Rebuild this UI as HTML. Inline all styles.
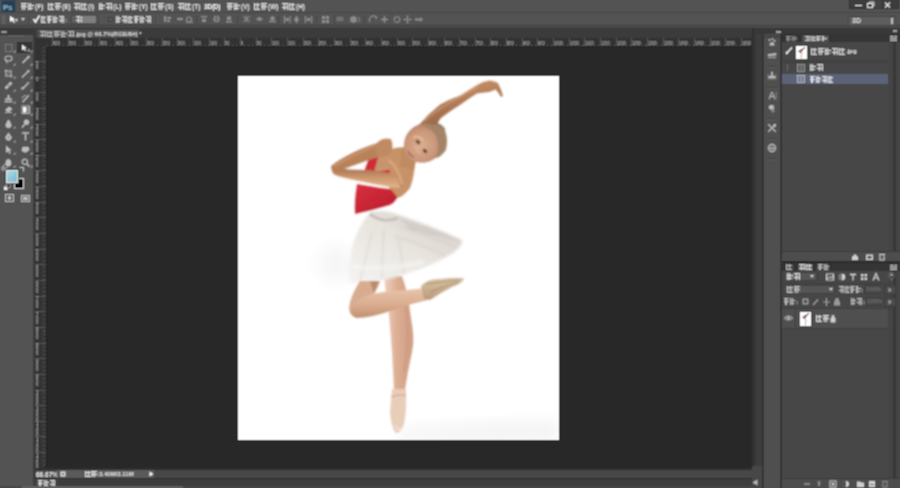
<!DOCTYPE html>
<html><head><meta charset="utf-8">
<style>
*{margin:0;padding:0;box-sizing:border-box}
html,body{width:900px;height:488px;overflow:hidden;background:#282828;font-family:"Liberation Sans",sans-serif;position:relative}
.a{position:absolute}
.t{position:absolute;font-size:7px;line-height:8px;color:#f0f0f0;white-space:nowrap;letter-spacing:0;font-weight:bold}
.rl{position:absolute;font-size:5.5px;line-height:6px;color:#a8a8a8;white-space:nowrap;font-weight:bold;}
.cj::before{content:"";position:absolute;left:0;top:1px;right:0;bottom:1px;background:currentColor;opacity:.2}
.cj{position:relative;opacity:.78;display:inline-block;width:7px;height:7px;margin-right:1px;vertical-align:top;background:linear-gradient(currentColor,currentColor) 0 0/100% 1px no-repeat,linear-gradient(currentColor,currentColor) 0 3px/100% 1px no-repeat,linear-gradient(currentColor,currentColor) 1px 0/1px 100% no-repeat,linear-gradient(currentColor,currentColor) calc(100% - 2px) 1px/1px calc(100% - 1px) no-repeat}
.cj.b{background:linear-gradient(currentColor,currentColor) 0 1px/100% 1px no-repeat,linear-gradient(currentColor,currentColor) 0 100%/100% 1px no-repeat,linear-gradient(currentColor,currentColor) 0 0/1px 100% no-repeat,linear-gradient(currentColor,currentColor) 60% 0/1px 100% no-repeat}
.cj.c{background:linear-gradient(currentColor,currentColor) 100% 0/1px 100% no-repeat,linear-gradient(currentColor,currentColor) 0 0/100% 1px no-repeat,linear-gradient(currentColor,currentColor) 0 4px/100% 1px no-repeat,linear-gradient(currentColor,currentColor) 2px 0/1px 100% no-repeat}
.cj.d{background:linear-gradient(currentColor,currentColor) 0 2px/100% 1px no-repeat,linear-gradient(currentColor,currentColor) 0 5px/80% 1px no-repeat,linear-gradient(currentColor,currentColor) 40% 0/1px 100% no-repeat,linear-gradient(currentColor,currentColor) 0 0/1px 100% no-repeat}
.m{position:absolute;top:3px;height:8px;font-size:7px;line-height:8px;color:#d0d0d0;white-space:nowrap}
.m span.p{display:inline-block;vertical-align:top}
svg{position:absolute;overflow:visible}
</style></head><body>
<svg width="0" height="0" style="position:absolute;left:0;top:0"><defs><filter id="sb" x="0" y="0" width="100%" height="100%"><feConvolveMatrix order="3" kernelMatrix="1 2 1 2 4 2 1 2 1" divisor="16" edgeMode="duplicate" preserveAlpha="false"/></filter></defs></svg>
<div id="root" style="position:absolute;left:0;top:0;width:900px;height:488px;overflow:hidden;filter:url(#sb)">
<div class="a" style="left:0px;top:0px;width:900px;height:13px;background:#525252;"></div>
<div class="a" style="left:0px;top:12px;width:900px;height:1px;background:#474747;"></div>
<div class="a" style="left:1px;top:0px;width:15px;height:13px;background:#2a3c4c;box-shadow:inset 0 0 0 1px #344c60"></div>
<div class="t" style="left:3px;top:2.5px;font-size:8px;line-height:9px;color:#86b8e0;font-weight:bold;letter-spacing:-.3px">Ps</div>
<div class="t" style="left:21px;top:3px;color:#d8d8d8"><span class="cj " style="width:6px;height:7px;margin-right:1px;color:#ffffff"></span><span class="cj d" style="width:6px;height:7px;margin-right:1px;color:#ffffff"></span><span style="font-size:6.5px;vertical-align:top;line-height:7px;color:#e8e8e8">(F)</span></div>
<div class="t" style="left:48px;top:3px;color:#d8d8d8"><span class="cj b" style="width:6px;height:7px;margin-right:1px;color:#ffffff"></span><span class="cj " style="width:6px;height:7px;margin-right:1px;color:#ffffff"></span><span style="font-size:6.5px;vertical-align:top;line-height:7px;color:#e8e8e8">(E)</span></div>
<div class="t" style="left:74px;top:3px;color:#d8d8d8"><span class="cj c" style="width:6px;height:7px;margin-right:1px;color:#ffffff"></span><span class="cj b" style="width:6px;height:7px;margin-right:1px;color:#ffffff"></span><span style="font-size:6.5px;vertical-align:top;line-height:7px;color:#e8e8e8">(I)</span></div>
<div class="t" style="left:99px;top:3px;color:#d8d8d8"><span class="cj d" style="width:6px;height:7px;margin-right:1px;color:#ffffff"></span><span class="cj c" style="width:6px;height:7px;margin-right:1px;color:#ffffff"></span><span style="font-size:6.5px;vertical-align:top;line-height:7px;color:#e8e8e8">(L)</span></div>
<div class="t" style="left:125px;top:3px;color:#d8d8d8"><span class="cj " style="width:6px;height:7px;margin-right:1px;color:#ffffff"></span><span class="cj d" style="width:6px;height:7px;margin-right:1px;color:#ffffff"></span><span style="font-size:6.5px;vertical-align:top;line-height:7px;color:#e8e8e8">(Y)</span></div>
<div class="t" style="left:151px;top:3px;color:#d8d8d8"><span class="cj b" style="width:6px;height:7px;margin-right:1px;color:#ffffff"></span><span class="cj " style="width:6px;height:7px;margin-right:1px;color:#ffffff"></span><span style="font-size:6.5px;vertical-align:top;line-height:7px;color:#e8e8e8">(S)</span></div>
<div class="t" style="left:178px;top:3px;color:#d8d8d8"><span class="cj c" style="width:6px;height:7px;margin-right:1px;color:#ffffff"></span><span class="cj b" style="width:6px;height:7px;margin-right:1px;color:#ffffff"></span><span style="font-size:6.5px;vertical-align:top;line-height:7px;color:#e8e8e8">(T)</span></div>
<div class="t" style="left:204px;top:3px;font-size:6.5px;line-height:7.5px;color:#ffffff;letter-spacing:-.2px">3D(D)</div>
<div class="t" style="left:227px;top:3px;color:#d8d8d8"><span class="cj " style="width:6px;height:7px;margin-right:1px;color:#ffffff"></span><span class="cj d" style="width:6px;height:7px;margin-right:1px;color:#ffffff"></span><span style="font-size:6.5px;vertical-align:top;line-height:7px;color:#e8e8e8">(V)</span></div>
<div class="t" style="left:254px;top:3px;color:#d8d8d8"><span class="cj b" style="width:6px;height:7px;margin-right:1px;color:#ffffff"></span><span class="cj " style="width:6px;height:7px;margin-right:1px;color:#ffffff"></span><span style="font-size:6.5px;vertical-align:top;line-height:7px;color:#e8e8e8">(W)</span></div>
<div class="t" style="left:282px;top:3px;color:#d8d8d8"><span class="cj c" style="width:6px;height:7px;margin-right:1px;color:#ffffff"></span><span class="cj b" style="width:6px;height:7px;margin-right:1px;color:#ffffff"></span><span style="font-size:6.5px;vertical-align:top;line-height:7px;color:#e8e8e8">(H)</span></div>
<div class="a" style="left:849px;top:0px;width:50px;height:9px;background:#3d3d3d;border:1px solid #333;border-top:none"></div>
<div class="a" style="left:855px;top:5px;width:7px;height:1px;background:#e8e8e8;"></div>
<svg style="left:866px;top:1px" width="9" height="8"><rect x="1.5" y="2.5" width="5" height="4" fill="#3d3d3d" stroke="#e0e0e0" stroke-width="1"/><path d="M3.5 2.5V1H8V5H6.5" stroke="#e0e0e0" stroke-width="1" fill="none"/></svg>
<div class="a" style="left:876px;top:1px;width:1px;height:7px;background:#474747;"></div>
<div class="a" style="left:878px;top:1px;width:1px;height:7px;background:#474747;"></div>
<div class="a" style="left:880px;top:1px;width:1px;height:7px;background:#474747;"></div>
<svg style="left:884px;top:2px" width="7" height="6"><path d="M1 0.5L6 5.5M6 0.5L1 5.5" stroke="#ececec" stroke-width="1.1"/></svg>
<div class="a" style="left:0px;top:13px;width:900px;height:11px;background:#535353;"></div>
<div class="a" style="left:0px;top:23px;width:900px;height:1px;background:#575757;"></div>
<div class="a" style="left:0px;top:24px;width:900px;height:4px;background:#484848;"></div>
<div class="a" style="left:2px;top:15px;width:1px;height:9px;background:#6a6a6a;"></div>
<div class="a" style="left:4px;top:15px;width:1px;height:9px;background:#6a6a6a;"></div>
<svg style="left:9px;top:15px" width="9" height="9"><path d="M1 1L1 7L3 5.5L5 8L6 7.2L4.2 4.8L6.5 4.5Z" fill="#ffffff"/><path d="M6 5H9M7.5 3.5V6.5" stroke="#cfcfcf" stroke-width="1"/></svg>
<svg style="left:21px;top:18px" width="5" height="4"><path d="M0 0H4L2 3Z" fill="#c8c8c8"/></svg>
<div class="a" style="left:29px;top:15px;width:1px;height:9px;background:#444;"></div>
<div class="a" style="left:30px;top:15px;width:1px;height:9px;background:#5e5e5e;"></div>
<svg style="left:33px;top:15px" width="7" height="8"><path d="M0.5 4L2.5 7L6.5 0.5" stroke="#fafafa" stroke-width="1.5" fill="none"/></svg>
<div class="t" style="left:41px;top:16px"><span class="cj b" style="width:5px;height:7px;margin-right:1px;color:#f8f8f8"></span><span class="cj " style="width:5px;height:7px;margin-right:1px;color:#f8f8f8"></span><span class="cj d" style="width:5px;height:7px;margin-right:1px;color:#f8f8f8"></span><span class="cj c" style="width:5px;height:7px;margin-right:1px;color:#f8f8f8"></span><span style="font-size:6px">:</span></div>
<div class="a" style="left:71px;top:15px;width:27px;height:9px;background:#5f5f5f;border:1px solid #474747"></div>
<div class="t" style="left:76px;top:16px"><span class="cj c" style="width:6px;height:7px;margin-right:0px;color:#fafafa"></span></div>
<div class="a" style="left:80px;top:16px;width:16px;height:7px;background:repeating-linear-gradient(90deg,#9a9a9a 0 1px,transparent 1px 2px),repeating-linear-gradient(180deg,#888 0 1px,transparent 1px 3px);opacity:.8"></div>
<div class="a" style="left:99px;top:15px;width:1px;height:9px;background:#444;"></div>
<div class="a" style="left:100px;top:15px;width:1px;height:9px;background:#5e5e5e;"></div>
<div class="a" style="left:108px;top:17px;width:5px;height:5px;background:#5a5a5a;border:1px solid #3c3c3c"></div>
<div class="t" style="left:116px;top:16px"><span class="cj d" style="width:5px;height:7px;margin-right:1px;color:#f8f8f8"></span><span class="cj c" style="width:5px;height:7px;margin-right:1px;color:#f8f8f8"></span><span class="cj b" style="width:5px;height:7px;margin-right:1px;color:#f8f8f8"></span><span class="cj " style="width:5px;height:7px;margin-right:1px;color:#f8f8f8"></span><span class="cj d" style="width:5px;height:7px;margin-right:1px;color:#f8f8f8"></span><span class="cj c" style="width:5px;height:7px;margin-right:1px;color:#f8f8f8"></span></div>
<div class="a" style="left:156px;top:15px;width:1px;height:9px;background:#444;"></div>
<div class="a" style="left:157px;top:15px;width:1px;height:9px;background:#5e5e5e;"></div>
<svg style="left:163px;top:15px" width="10" height="9"><rect x="1" y="1" width="2" height="6" fill="#8c8c8c"/><rect x="4" y="2" width="4" height="2" fill="#8c8c8c"/><rect x="4" y="5" width="3" height="2" fill="#8c8c8c"/></svg>
<svg style="left:176px;top:15px" width="10" height="9"><rect x="1" y="3" width="6" height="2" fill="#8c8c8c"/><circle cx="4" cy="4" r="1.5" fill="#8c8c8c"/></svg>
<svg style="left:185px;top:15px" width="10" height="9"><circle cx="4" cy="4.5" r="2.5" fill="none" stroke="#8c8c8c" stroke-width="1.2"/><rect x="1" y="6.5" width="7" height="1.2" fill="#8c8c8c"/></svg>
<svg style="left:200px;top:15px" width="10" height="9"><rect x="1" y="1" width="6" height="1.5" fill="#8c8c8c"/><rect x="2" y="4" width="4" height="3" fill="#8c8c8c"/></svg>
<svg style="left:212px;top:15px" width="10" height="9"><rect x="1" y="3.5" width="7" height="1.2" fill="#8c8c8c"/><rect x="2.5" y="1.5" width="4" height="5" fill="none" stroke="#8c8c8c" stroke-width="1"/></svg>
<svg style="left:225px;top:15px" width="10" height="9"><rect x="1" y="6" width="6" height="1.5" fill="#8c8c8c"/><rect x="2" y="1.5" width="4" height="3.5" fill="#8c8c8c"/></svg>
<svg style="left:242px;top:15px" width="10" height="9"><path d="M1 2H8M1 6H8" stroke="#8c8c8c" stroke-width="1.2"/><circle cx="4.5" cy="4" r="1.6" fill="#8c8c8c"/></svg>
<svg style="left:255px;top:15px" width="10" height="9"><rect x="1" y="3.5" width="7" height="1.2" fill="#8c8c8c"/><circle cx="4.5" cy="4" r="2" fill="#8c8c8c"/></svg>
<svg style="left:268px;top:15px" width="10" height="9"><path d="M1 6.5H8" stroke="#8c8c8c" stroke-width="1.2"/><circle cx="4.5" cy="3.5" r="2.2" fill="#8c8c8c"/></svg>
<svg style="left:283px;top:15px" width="10" height="9"><path d="M1.5 1V8M7 1V8" stroke="#8c8c8c" stroke-width="1.2"/><circle cx="4.2" cy="4.5" r="1.7" fill="#8c8c8c"/></svg>
<svg style="left:292px;top:15px" width="10" height="9"><path d="M4.5 1V8" stroke="#8c8c8c" stroke-width="1.2"/><circle cx="4.5" cy="4.5" r="2.2" fill="#8c8c8c"/></svg>
<svg style="left:304px;top:15px" width="10" height="9"><path d="M1.5 1V8M7.5 1V8" stroke="#8c8c8c" stroke-width="1.2"/><circle cx="4.5" cy="4.5" r="1.8" fill="#8c8c8c"/></svg>
<svg style="left:321px;top:15px" width="10" height="9"><rect x="1" y="1" width="3" height="3" fill="#8c8c8c"/><rect x="5" y="1" width="3" height="3" fill="#8c8c8c"/><rect x="1" y="5" width="3" height="3" fill="#8c8c8c"/><rect x="5" y="5" width="3" height="3" fill="#8c8c8c"/></svg>
<svg style="left:349px;top:15px" width="10" height="9"><circle cx="4.5" cy="4.5" r="3.3" fill="#8c8c8c"/><path d="M9 2L11 4.5L9 7" stroke="#8c8c8c" fill="none"/></svg>
<svg style="left:369px;top:15px" width="10" height="9"><path d="M1 7A4 4 0 0 1 8 3" stroke="#8c8c8c" stroke-width="1.3" fill="none"/><path d="M6.5 1.5L8.5 3L6.5 4.5Z" fill="#8c8c8c"/></svg>
<svg style="left:380px;top:15px" width="10" height="9"><path d="M4.5 1V8M1 4.5H8" stroke="#8c8c8c" stroke-width="1.3"/><circle cx="4.5" cy="4.5" r="1.5" fill="#8c8c8c"/></svg>
<svg style="left:393px;top:15px" width="10" height="9"><circle cx="4" cy="4.5" r="2.8" fill="none" stroke="#8c8c8c" stroke-width="1.1"/></svg>
<svg style="left:403px;top:15px" width="10" height="9"><path d="M4.5 0.5V8.5M0.5 4.5H8.5" stroke="#8c8c8c" stroke-width="1.1"/><path d="M4.5 0.5L3 2H6Z M4.5 8.5L3 7H6Z M0.5 4.5L2 3V6Z M8.5 4.5L7 3V6Z" fill="#8c8c8c"/></svg>
<svg style="left:414px;top:15px" width="10" height="9"><path d="M1 4.5H7" stroke="#8c8c8c" stroke-width="2.2"/><path d="M6.5 2L9 4.5L6.5 7Z" fill="#8c8c8c"/></svg>
<div class="a" style="left:196px;top:15px;width:1px;height:9px;background:#474747;"></div>
<div class="a" style="left:237px;top:15px;width:1px;height:9px;background:#474747;"></div>
<div class="a" style="left:278px;top:15px;width:1px;height:9px;background:#474747;"></div>
<div class="a" style="left:316px;top:15px;width:1px;height:9px;background:#474747;"></div>
<div class="a" style="left:334px;top:15px;width:1px;height:9px;background:#474747;"></div>
<div class="a" style="left:364px;top:15px;width:1px;height:9px;background:#474747;"></div>
<div class="t" style="left:336px;top:16px;font-size:6px;line-height:7px;color:#8c8c8c;">3D</div>
<div class="a" style="left:848px;top:16px;width:48px;height:10px;background:#5d5d5d;border:1px solid #464646"></div>
<div class="t" style="left:852px;top:17px;font-size:7px;line-height:8px;color:#e0e0e0;">3D</div>
<div class="a" style="left:891px;top:18px;width:2px;height:6px;background:#bdbdbd;"></div>
<div class="a" style="left:0px;top:28px;width:33px;height:460px;background:#535353;"></div>
<div class="a" style="left:0px;top:28px;width:33px;height:7px;background:#393939;"></div>
<div class="a" style="left:1px;top:31px;width:6px;height:2px;background:#9a9a9a;border-radius:1px"></div>
<div class="a" style="left:33px;top:28px;width:2px;height:460px;background:#3a3a3a;"></div>
<div class="a" style="left:8px;top:36px;width:16px;height:1px;background:#6a6a6a;"></div>
<div class="a" style="left:8px;top:37px;width:16px;height:1px;background:#454545;"></div>
<div class="a" style="left:17px;top:42px;width:15px;height:11px;background:#343434;border:1px solid #2a2a2a"></div>
<svg style="left:4px;top:42.9px" width="10" height="10" viewBox="0 0 10 10"><rect x="1.5" y="1.5" width="6.5" height="7" fill="none" stroke="#9c9c9c" stroke-width="1" stroke-dasharray="1 1"/></svg>
<svg style="left:13px;top:50.4px" width="3" height="3"><path d="M0 2.5H2.5V0Z" fill="#a8a8a8"/></svg>
<svg style="left:20.5px;top:42.9px" width="10" height="10" viewBox="0 0 10 10"><path d="M1 1.5V7.5L2.8 6L4 8.2L5 7.7L3.9 5.5L6 5.3Z" fill="#ececec"/><path d="M5.5 8.5L8 5.5L10 8.5Z" fill="#9a9a9a"/></svg>
<svg style="left:29.5px;top:50.4px" width="3" height="3"><path d="M0 2.5H2.5V0Z" fill="#a8a8a8"/></svg>
<svg style="left:4px;top:55.2px" width="10" height="10" viewBox="0 0 10 10"><ellipse cx="4.5" cy="3.5" rx="3.5" ry="2.5" fill="none" stroke="#bdbdbd" stroke-width="1.2"/><path d="M2.5 5.5Q2 8 3.5 8.5" stroke="#bdbdbd" fill="none"/></svg>
<svg style="left:13px;top:62.7px" width="3" height="3"><path d="M0 2.5H2.5V0Z" fill="#a8a8a8"/></svg>
<svg style="left:20.5px;top:55.2px" width="10" height="10" viewBox="0 0 10 10"><path d="M1.5 8L7.5 2" stroke="#bdbdbd" stroke-width="1.6"/><circle cx="7.5" cy="2" r="1.3" fill="#bdbdbd"/></svg>
<svg style="left:29.5px;top:62.7px" width="3" height="3"><path d="M0 2.5H2.5V0Z" fill="#a8a8a8"/></svg>
<svg style="left:4px;top:68.5px" width="10" height="10" viewBox="0 0 10 10"><path d="M2 0.5V7H8.5M0.5 2H7V8.5" stroke="#bdbdbd" stroke-width="1.1" fill="none"/><path d="M1 8L8 1" stroke="#9a9a9a" stroke-width=".7"/></svg>
<svg style="left:13px;top:76.0px" width="3" height="3"><path d="M0 2.5H2.5V0Z" fill="#a8a8a8"/></svg>
<svg style="left:20.5px;top:68.5px" width="10" height="10" viewBox="0 0 10 10"><path d="M1 8.5L6.5 3" stroke="#bdbdbd" stroke-width="1.3"/><path d="M5.5 2L8 0.8L8.7 1.5L7.5 4Z" fill="#bdbdbd"/></svg>
<svg style="left:29.5px;top:76.0px" width="3" height="3"><path d="M0 2.5H2.5V0Z" fill="#a8a8a8"/></svg>
<svg style="left:4px;top:81.4px" width="10" height="10" viewBox="0 0 10 10"><path d="M1.5 7.5L7.5 1.5" stroke="#bdbdbd" stroke-width="2.6"/><circle cx="4.5" cy="4.5" r=".8" fill="#535353"/></svg>
<svg style="left:13px;top:88.9px" width="3" height="3"><path d="M0 2.5H2.5V0Z" fill="#a8a8a8"/></svg>
<svg style="left:20.5px;top:81.4px" width="10" height="10" viewBox="0 0 10 10"><path d="M1.5 8.2L7.8 1.2" stroke="#bdbdbd" stroke-width="1.3"/><path d="M1 8.5Q0.5 6.5 2.5 6.5" stroke="#bdbdbd" stroke-width="1.4" fill="none"/></svg>
<svg style="left:29.5px;top:88.9px" width="3" height="3"><path d="M0 2.5H2.5V0Z" fill="#a8a8a8"/></svg>
<svg style="left:4px;top:93.7px" width="10" height="10" viewBox="0 0 10 10"><path d="M3.5 1H5.5V4.5H8V6H1V4.5H3.5Z" fill="#bdbdbd"/><rect x="0.5" y="7" width="8" height="1.3" fill="#bdbdbd"/></svg>
<svg style="left:13px;top:101.2px" width="3" height="3"><path d="M0 2.5H2.5V0Z" fill="#a8a8a8"/></svg>
<svg style="left:20.5px;top:93.7px" width="10" height="10" viewBox="0 0 10 10"><path d="M1.5 8.2L7.8 1.2" stroke="#bdbdbd" stroke-width="1.3"/><path d="M1 4.5Q2 1.5 5 1.5" stroke="#bdbdbd" stroke-width=".9" fill="none"/></svg>
<svg style="left:29.5px;top:101.2px" width="3" height="3"><path d="M0 2.5H2.5V0Z" fill="#a8a8a8"/></svg>
<svg style="left:4px;top:105.2px" width="10" height="10" viewBox="0 0 10 10"><path d="M1 5L5 1.5L8.5 4L4.5 7.5Z" fill="#bdbdbd"/><path d="M1 7.5H8" stroke="#bdbdbd" stroke-width=".8"/></svg>
<svg style="left:13px;top:112.7px" width="3" height="3"><path d="M0 2.5H2.5V0Z" fill="#a8a8a8"/></svg>
<svg style="left:20.5px;top:105.2px" width="10" height="10" viewBox="0 0 10 10"><rect x="1" y="1" width="7.5" height="7.5" fill="none" stroke="#bdbdbd" stroke-width=".9"/><rect x="2" y="2" width="5.5" height="5.5" fill="#9a9a9a"/><rect x="2" y="2" width="3" height="5.5" fill="#fafafa"/></svg>
<svg style="left:29.5px;top:112.7px" width="3" height="3"><path d="M0 2.5H2.5V0Z" fill="#a8a8a8"/></svg>
<svg style="left:4px;top:118.8px" width="10" height="10" viewBox="0 0 10 10"><path d="M4.5 0.5Q7.5 4.5 7.5 6A3 3 0 0 1 1.5 6Q1.5 4.5 4.5 0.5Z" fill="#bdbdbd"/></svg>
<svg style="left:13px;top:126.3px" width="3" height="3"><path d="M0 2.5H2.5V0Z" fill="#a8a8a8"/></svg>
<svg style="left:20.5px;top:118.8px" width="10" height="10" viewBox="0 0 10 10"><circle cx="5.5" cy="3.2" r="2.6" fill="#bdbdbd"/><path d="M4 5L1 8.5" stroke="#bdbdbd" stroke-width="1.3"/></svg>
<svg style="left:29.5px;top:126.3px" width="3" height="3"><path d="M0 2.5H2.5V0Z" fill="#a8a8a8"/></svg>
<svg style="left:4px;top:132.1px" width="10" height="10" viewBox="0 0 10 10"><path d="M4.5 0.5L8 5.5L6 8.5H3L1 5.5Z" fill="#bdbdbd"/><circle cx="4.5" cy="5.2" r=".8" fill="#535353"/></svg>
<svg style="left:13px;top:139.6px" width="3" height="3"><path d="M0 2.5H2.5V0Z" fill="#a8a8a8"/></svg>
<svg style="left:20.5px;top:132.1px" width="10" height="10" viewBox="0 0 10 10"><path d="M1 1H8M4.5 1V8.5" stroke="#bdbdbd" stroke-width="1.4"/></svg>
<svg style="left:29.5px;top:139.6px" width="3" height="3"><path d="M0 2.5H2.5V0Z" fill="#a8a8a8"/></svg>
<svg style="left:4px;top:144.5px" width="10" height="10" viewBox="0 0 10 10"><path d="M2 0.5V8L4 6.2L5.6 9L6.8 8.4L5.3 5.6L7.8 5.4Z" fill="#bdbdbd"/></svg>
<svg style="left:13px;top:152.0px" width="3" height="3"><path d="M0 2.5H2.5V0Z" fill="#a8a8a8"/></svg>
<svg style="left:20.5px;top:144.5px" width="10" height="10" viewBox="0 0 10 10"><path d="M1 3Q2 0.5 4.5 2Q7 0.5 8 3Q9 6 6 6.5Q5 8.8 3 7Q0 7 1 3Z" fill="#bdbdbd"/></svg>
<svg style="left:29.5px;top:152.0px" width="3" height="3"><path d="M0 2.5H2.5V0Z" fill="#a8a8a8"/></svg>
<svg style="left:4px;top:157.5px" width="10" height="10" viewBox="0 0 10 10"><path d="M2 4V2.2Q2.8 1.5 3.2 2.2V1.2Q4 0.5 4.6 1.2V1.5Q5.4 1 6 1.7V2.5Q6.8 2.2 7.2 2.9V6Q6.8 8.5 4.5 8.5Q2.5 8.5 1 5.5Q1.2 4.5 2 4Z" fill="#bdbdbd"/></svg>
<svg style="left:13px;top:165.0px" width="3" height="3"><path d="M0 2.5H2.5V0Z" fill="#a8a8a8"/></svg>
<svg style="left:20.5px;top:157.5px" width="10" height="10" viewBox="0 0 10 10"><circle cx="3.8" cy="3.8" r="2.6" fill="none" stroke="#bdbdbd" stroke-width="1.3"/><path d="M5.8 5.8L8.5 8.5" stroke="#bdbdbd" stroke-width="1.6"/></svg>
<svg style="left:29.5px;top:165.0px" width="3" height="3"><path d="M0 2.5H2.5V0Z" fill="#a8a8a8"/></svg>
<svg style="left:2px;top:165px" width="6" height="6"><rect x="0" y="2" width="3" height="3" fill="none" stroke="#cfcfcf" stroke-width=".8"/><rect x="2" y="0" width="3" height="3" fill="#222" stroke="#cfcfcf" stroke-width=".8"/></svg>
<svg style="left:19px;top:166px" width="6" height="6"><path d="M0.5 1.5H4.5V5.5" stroke="#cfcfcf" stroke-width=".9" fill="none"/></svg>
<div class="a" style="left:14px;top:178px;width:10px;height:11px;background:#000;border:1px solid #d0d0d0"></div>
<div class="a" style="left:6px;top:170px;width:12px;height:13px;background:#88c6d6;border:1px solid #e8e8e8;box-shadow:0 0 0 1px #333;background-image:linear-gradient(135deg,#a8dce6,#78b8cc)"></div>
<svg style="left:4px;top:184px" width="7" height="6"><rect x="0" y="2.5" width="3.5" height="3.5" fill="#eee"/><rect x="2.5" y="0" width="3.5" height="3.5" fill="#111" stroke="#ddd" stroke-width=".6"/></svg>
<svg style="left:5px;top:194px" width="10" height="9"><rect x="0.5" y="0.5" width="8" height="7" fill="none" stroke="#bdbdbd" stroke-width="1"/><circle cx="4.5" cy="4" r="2" fill="#bdbdbd"/></svg>
<svg style="left:21px;top:194px" width="10" height="9"><rect x="0.5" y="1.5" width="8" height="6" fill="none" stroke="#bdbdbd" stroke-width="1"/><rect x="2" y="3" width="5" height="3" fill="#bdbdbd"/></svg>
<div class="a" style="left:35px;top:28px;width:719px;height:10px;background:#3b3b3b;"></div>
<div class="a" style="left:37px;top:30px;width:102px;height:8px;background:#4b4b4b;border-top:1px solid #5a5a5a"></div>
<div class="t" style="left:40px;top:31px;font-size:6px;line-height:7px;color:#e2e2e2"><span class="cj c" style="width:6px;height:6px;margin-right:1px;color:#d0d0d0"></span><span class="cj b" style="width:6px;height:6px;margin-right:1px;color:#d0d0d0"></span><span class="cj " style="width:6px;height:6px;margin-right:1px;color:#d0d0d0"></span><span class="cj d" style="width:6px;height:6px;margin-right:1px;color:#d0d0d0"></span><span class="cj c" style="width:6px;height:6px;margin-right:1px;color:#d0d0d0"></span><span style="vertical-align:top">.jpg @ 66.7%(RGB/8#) *</span></div>
<div class="a" style="left:35px;top:38px;width:719px;height:9px;background:#323232;"></div>
<div class="a" style="left:35px;top:38px;width:12px;height:430px;background:#323232;"></div>
<div class="a" style="left:47px;top:46px;width:707px;height:1px;background:#262626;"></div>
<div class="a" style="left:46px;top:47px;width:1px;height:421px;background:#262626;"></div>
<div class="a" style="left:40px;top:47px;width:1px;height:421px;background:#2a2a2a;"></div>
<div class="a" style="left:41px;top:47px;width:3px;height:421px;background:#383838;"></div>
<div class="a" style="left:47px;top:45px;width:705px;height:1px;background:repeating-linear-gradient(90deg,#6a6a6a 0 1px,transparent 1px 3.9375px);opacity:.8"></div>
<div class="a" style="left:44px;top:47px;width:1px;height:421px;background:repeating-linear-gradient(180deg,#6a6a6a 0 1px,transparent 1px 3.9375px);opacity:.8"></div>
<div class="a" style="left:52.2px;top:38px;width:1px;height:8px;background:#555"></div>
<div class="rl" style="left:53.2px;top:39.5px;transform:scaleX(.72);transform-origin:0 0">600</div>
<div class="a" style="left:67.8px;top:38px;width:1px;height:8px;background:#555"></div>
<div class="rl" style="left:68.8px;top:39.5px;transform:scaleX(.72);transform-origin:0 0">550</div>
<div class="a" style="left:83.5px;top:38px;width:1px;height:8px;background:#555"></div>
<div class="rl" style="left:84.5px;top:39.5px;transform:scaleX(.72);transform-origin:0 0">500</div>
<div class="a" style="left:99.2px;top:38px;width:1px;height:8px;background:#555"></div>
<div class="rl" style="left:100.2px;top:39.5px;transform:scaleX(.72);transform-origin:0 0">450</div>
<div class="a" style="left:114.8px;top:38px;width:1px;height:8px;background:#555"></div>
<div class="rl" style="left:115.8px;top:39.5px;transform:scaleX(.72);transform-origin:0 0">400</div>
<div class="a" style="left:130.4px;top:38px;width:1px;height:8px;background:#555"></div>
<div class="rl" style="left:131.4px;top:39.5px;transform:scaleX(.72);transform-origin:0 0">350</div>
<div class="a" style="left:146.1px;top:38px;width:1px;height:8px;background:#555"></div>
<div class="rl" style="left:147.1px;top:39.5px;transform:scaleX(.72);transform-origin:0 0">300</div>
<div class="a" style="left:161.8px;top:38px;width:1px;height:8px;background:#555"></div>
<div class="rl" style="left:162.8px;top:39.5px;transform:scaleX(.72);transform-origin:0 0">250</div>
<div class="a" style="left:177.4px;top:38px;width:1px;height:8px;background:#555"></div>
<div class="rl" style="left:178.4px;top:39.5px;transform:scaleX(.72);transform-origin:0 0">200</div>
<div class="a" style="left:193.1px;top:38px;width:1px;height:8px;background:#555"></div>
<div class="rl" style="left:194.1px;top:39.5px;transform:scaleX(.72);transform-origin:0 0">150</div>
<div class="a" style="left:208.7px;top:38px;width:1px;height:8px;background:#555"></div>
<div class="rl" style="left:209.7px;top:39.5px;transform:scaleX(.72);transform-origin:0 0">100</div>
<div class="a" style="left:224.3px;top:38px;width:1px;height:8px;background:#555"></div>
<div class="rl" style="left:225.3px;top:39.5px;transform:scaleX(.72);transform-origin:0 0">50</div>
<div class="a" style="left:240.0px;top:38px;width:1px;height:8px;background:#555"></div>
<div class="rl" style="left:241.0px;top:39.5px;transform:scaleX(.72);transform-origin:0 0">0</div>
<div class="a" style="left:255.7px;top:38px;width:1px;height:8px;background:#555"></div>
<div class="rl" style="left:256.6px;top:39.5px;transform:scaleX(.72);transform-origin:0 0">50</div>
<div class="a" style="left:271.3px;top:38px;width:1px;height:8px;background:#555"></div>
<div class="rl" style="left:272.3px;top:39.5px;transform:scaleX(.72);transform-origin:0 0">100</div>
<div class="a" style="left:286.9px;top:38px;width:1px;height:8px;background:#555"></div>
<div class="rl" style="left:287.9px;top:39.5px;transform:scaleX(.72);transform-origin:0 0">150</div>
<div class="a" style="left:302.6px;top:38px;width:1px;height:8px;background:#555"></div>
<div class="rl" style="left:303.6px;top:39.5px;transform:scaleX(.72);transform-origin:0 0">200</div>
<div class="a" style="left:318.2px;top:38px;width:1px;height:8px;background:#555"></div>
<div class="rl" style="left:319.2px;top:39.5px;transform:scaleX(.72);transform-origin:0 0">250</div>
<div class="a" style="left:333.9px;top:38px;width:1px;height:8px;background:#555"></div>
<div class="rl" style="left:334.9px;top:39.5px;transform:scaleX(.72);transform-origin:0 0">300</div>
<div class="a" style="left:349.6px;top:38px;width:1px;height:8px;background:#555"></div>
<div class="rl" style="left:350.6px;top:39.5px;transform:scaleX(.72);transform-origin:0 0">350</div>
<div class="a" style="left:365.2px;top:38px;width:1px;height:8px;background:#555"></div>
<div class="rl" style="left:366.2px;top:39.5px;transform:scaleX(.72);transform-origin:0 0">400</div>
<div class="a" style="left:380.9px;top:38px;width:1px;height:8px;background:#555"></div>
<div class="rl" style="left:381.9px;top:39.5px;transform:scaleX(.72);transform-origin:0 0">450</div>
<div class="a" style="left:396.5px;top:38px;width:1px;height:8px;background:#555"></div>
<div class="rl" style="left:397.5px;top:39.5px;transform:scaleX(.72);transform-origin:0 0">500</div>
<div class="a" style="left:412.1px;top:38px;width:1px;height:8px;background:#555"></div>
<div class="rl" style="left:413.1px;top:39.5px;transform:scaleX(.72);transform-origin:0 0">550</div>
<div class="a" style="left:427.8px;top:38px;width:1px;height:8px;background:#555"></div>
<div class="rl" style="left:428.8px;top:39.5px;transform:scaleX(.72);transform-origin:0 0">600</div>
<div class="a" style="left:443.5px;top:38px;width:1px;height:8px;background:#555"></div>
<div class="rl" style="left:444.5px;top:39.5px;transform:scaleX(.72);transform-origin:0 0">650</div>
<div class="a" style="left:459.1px;top:38px;width:1px;height:8px;background:#555"></div>
<div class="rl" style="left:460.1px;top:39.5px;transform:scaleX(.72);transform-origin:0 0">700</div>
<div class="a" style="left:474.8px;top:38px;width:1px;height:8px;background:#555"></div>
<div class="rl" style="left:475.8px;top:39.5px;transform:scaleX(.72);transform-origin:0 0">750</div>
<div class="a" style="left:490.4px;top:38px;width:1px;height:8px;background:#555"></div>
<div class="rl" style="left:491.4px;top:39.5px;transform:scaleX(.72);transform-origin:0 0">800</div>
<div class="a" style="left:506.1px;top:38px;width:1px;height:8px;background:#555"></div>
<div class="rl" style="left:507.1px;top:39.5px;transform:scaleX(.72);transform-origin:0 0">850</div>
<div class="a" style="left:521.7px;top:38px;width:1px;height:8px;background:#555"></div>
<div class="rl" style="left:522.7px;top:39.5px;transform:scaleX(.72);transform-origin:0 0">900</div>
<div class="a" style="left:537.4px;top:38px;width:1px;height:8px;background:#555"></div>
<div class="rl" style="left:538.4px;top:39.5px;transform:scaleX(.72);transform-origin:0 0">950</div>
<div class="a" style="left:553.0px;top:38px;width:1px;height:8px;background:#555"></div>
<div class="rl" style="left:554.0px;top:39.5px;transform:scaleX(.72);transform-origin:0 0">1000</div>
<div class="a" style="left:568.7px;top:38px;width:1px;height:8px;background:#555"></div>
<div class="rl" style="left:569.7px;top:39.5px;transform:scaleX(.72);transform-origin:0 0">1050</div>
<div class="a" style="left:584.3px;top:38px;width:1px;height:8px;background:#555"></div>
<div class="rl" style="left:585.3px;top:39.5px;transform:scaleX(.72);transform-origin:0 0">1100</div>
<div class="a" style="left:600.0px;top:38px;width:1px;height:8px;background:#555"></div>
<div class="rl" style="left:601.0px;top:39.5px;transform:scaleX(.72);transform-origin:0 0">1150</div>
<div class="a" style="left:615.6px;top:38px;width:1px;height:8px;background:#555"></div>
<div class="rl" style="left:616.6px;top:39.5px;transform:scaleX(.72);transform-origin:0 0">1200</div>
<div class="a" style="left:631.2px;top:38px;width:1px;height:8px;background:#555"></div>
<div class="rl" style="left:632.2px;top:39.5px;transform:scaleX(.72);transform-origin:0 0">1250</div>
<div class="a" style="left:646.9px;top:38px;width:1px;height:8px;background:#555"></div>
<div class="rl" style="left:647.9px;top:39.5px;transform:scaleX(.72);transform-origin:0 0">1300</div>
<div class="a" style="left:662.5px;top:38px;width:1px;height:8px;background:#555"></div>
<div class="rl" style="left:663.5px;top:39.5px;transform:scaleX(.72);transform-origin:0 0">1350</div>
<div class="a" style="left:678.2px;top:38px;width:1px;height:8px;background:#555"></div>
<div class="rl" style="left:679.2px;top:39.5px;transform:scaleX(.72);transform-origin:0 0">1400</div>
<div class="a" style="left:693.9px;top:38px;width:1px;height:8px;background:#555"></div>
<div class="rl" style="left:694.9px;top:39.5px;transform:scaleX(.72);transform-origin:0 0">1450</div>
<div class="a" style="left:709.5px;top:38px;width:1px;height:8px;background:#555"></div>
<div class="rl" style="left:710.5px;top:39.5px;transform:scaleX(.72);transform-origin:0 0">1500</div>
<div class="a" style="left:725.2px;top:38px;width:1px;height:8px;background:#555"></div>
<div class="rl" style="left:726.2px;top:39.5px;transform:scaleX(.72);transform-origin:0 0">1550</div>
<div class="a" style="left:740.8px;top:38px;width:1px;height:8px;background:#555"></div>
<div class="rl" style="left:741.8px;top:39.5px;transform:scaleX(.72);transform-origin:0 0">1600</div>
<div class="a" style="left:35px;top:60.9px;width:11px;height:1px;background:#555"></div>
<div class="rl" style="left:36px;top:62.4px;width:4px;line-height:4px;font-size:4.5px;word-break:break-all;white-space:normal">50</div>
<div class="a" style="left:35px;top:76.5px;width:11px;height:1px;background:#555"></div>
<div class="rl" style="left:36px;top:78.0px;width:4px;line-height:4px;font-size:4.5px;word-break:break-all;white-space:normal">0</div>
<div class="a" style="left:35px;top:92.2px;width:11px;height:1px;background:#555"></div>
<div class="rl" style="left:36px;top:93.7px;width:4px;line-height:4px;font-size:4.5px;word-break:break-all;white-space:normal">50</div>
<div class="a" style="left:35px;top:107.8px;width:11px;height:1px;background:#555"></div>
<div class="rl" style="left:36px;top:109.3px;width:4px;line-height:4px;font-size:4.5px;word-break:break-all;white-space:normal">100</div>
<div class="a" style="left:35px;top:123.5px;width:11px;height:1px;background:#555"></div>
<div class="rl" style="left:36px;top:125.0px;width:4px;line-height:4px;font-size:4.5px;word-break:break-all;white-space:normal">150</div>
<div class="a" style="left:35px;top:139.1px;width:11px;height:1px;background:#555"></div>
<div class="rl" style="left:36px;top:140.6px;width:4px;line-height:4px;font-size:4.5px;word-break:break-all;white-space:normal">200</div>
<div class="a" style="left:35px;top:154.8px;width:11px;height:1px;background:#555"></div>
<div class="rl" style="left:36px;top:156.2px;width:4px;line-height:4px;font-size:4.5px;word-break:break-all;white-space:normal">250</div>
<div class="a" style="left:35px;top:170.4px;width:11px;height:1px;background:#555"></div>
<div class="rl" style="left:36px;top:171.9px;width:4px;line-height:4px;font-size:4.5px;word-break:break-all;white-space:normal">300</div>
<div class="a" style="left:35px;top:186.1px;width:11px;height:1px;background:#555"></div>
<div class="rl" style="left:36px;top:187.6px;width:4px;line-height:4px;font-size:4.5px;word-break:break-all;white-space:normal">350</div>
<div class="a" style="left:35px;top:201.7px;width:11px;height:1px;background:#555"></div>
<div class="rl" style="left:36px;top:203.2px;width:4px;line-height:4px;font-size:4.5px;word-break:break-all;white-space:normal">400</div>
<div class="a" style="left:35px;top:217.3px;width:11px;height:1px;background:#555"></div>
<div class="rl" style="left:36px;top:218.8px;width:4px;line-height:4px;font-size:4.5px;word-break:break-all;white-space:normal">450</div>
<div class="a" style="left:35px;top:233.0px;width:11px;height:1px;background:#555"></div>
<div class="rl" style="left:36px;top:234.5px;width:4px;line-height:4px;font-size:4.5px;word-break:break-all;white-space:normal">500</div>
<div class="a" style="left:35px;top:248.7px;width:11px;height:1px;background:#555"></div>
<div class="rl" style="left:36px;top:250.2px;width:4px;line-height:4px;font-size:4.5px;word-break:break-all;white-space:normal">550</div>
<div class="a" style="left:35px;top:264.3px;width:11px;height:1px;background:#555"></div>
<div class="rl" style="left:36px;top:265.8px;width:4px;line-height:4px;font-size:4.5px;word-break:break-all;white-space:normal">600</div>
<div class="a" style="left:35px;top:280.0px;width:11px;height:1px;background:#555"></div>
<div class="rl" style="left:36px;top:281.5px;width:4px;line-height:4px;font-size:4.5px;word-break:break-all;white-space:normal">650</div>
<div class="a" style="left:35px;top:295.6px;width:11px;height:1px;background:#555"></div>
<div class="rl" style="left:36px;top:297.1px;width:4px;line-height:4px;font-size:4.5px;word-break:break-all;white-space:normal">700</div>
<div class="a" style="left:35px;top:311.2px;width:11px;height:1px;background:#555"></div>
<div class="rl" style="left:36px;top:312.8px;width:4px;line-height:4px;font-size:4.5px;word-break:break-all;white-space:normal">750</div>
<div class="a" style="left:35px;top:326.9px;width:11px;height:1px;background:#555"></div>
<div class="rl" style="left:36px;top:328.4px;width:4px;line-height:4px;font-size:4.5px;word-break:break-all;white-space:normal">800</div>
<div class="a" style="left:35px;top:342.6px;width:11px;height:1px;background:#555"></div>
<div class="rl" style="left:36px;top:344.1px;width:4px;line-height:4px;font-size:4.5px;word-break:break-all;white-space:normal">850</div>
<div class="a" style="left:35px;top:358.2px;width:11px;height:1px;background:#555"></div>
<div class="rl" style="left:36px;top:359.7px;width:4px;line-height:4px;font-size:4.5px;word-break:break-all;white-space:normal">900</div>
<div class="a" style="left:35px;top:373.9px;width:11px;height:1px;background:#555"></div>
<div class="rl" style="left:36px;top:375.4px;width:4px;line-height:4px;font-size:4.5px;word-break:break-all;white-space:normal">950</div>
<div class="a" style="left:35px;top:389.5px;width:11px;height:1px;background:#555"></div>
<div class="rl" style="left:36px;top:391.0px;width:4px;line-height:4px;font-size:4.5px;word-break:break-all;white-space:normal">1000</div>
<div class="a" style="left:35px;top:405.2px;width:11px;height:1px;background:#555"></div>
<div class="rl" style="left:36px;top:406.7px;width:4px;line-height:4px;font-size:4.5px;word-break:break-all;white-space:normal">1050</div>
<div class="a" style="left:35px;top:420.8px;width:11px;height:1px;background:#555"></div>
<div class="rl" style="left:36px;top:422.3px;width:4px;line-height:4px;font-size:4.5px;word-break:break-all;white-space:normal">1100</div>
<div class="a" style="left:35px;top:436.4px;width:11px;height:1px;background:#555"></div>
<div class="rl" style="left:36px;top:437.9px;width:4px;line-height:4px;font-size:4.5px;word-break:break-all;white-space:normal">1150</div>
<div class="a" style="left:35px;top:452.1px;width:11px;height:1px;background:#555"></div>
<div class="rl" style="left:36px;top:453.6px;width:4px;line-height:4px;font-size:4.5px;word-break:break-all;white-space:normal">1200</div>
<div class="a" style="left:35px;top:468px;width:719px;height:2px;background:#2f2f2f;"></div>
<div class="a" style="left:35px;top:470px;width:727px;height:8px;background:#474747;"></div>
<div class="t" style="left:36px;top:470.5px;font-size:6.5px;line-height:7.5px;color:#f4f4f4;">66.67%</div>
<div class="a" style="left:57px;top:470px;width:97px;height:8px;background:#5a5a5a;"></div>
<svg style="left:60px;top:471px" width="6" height="6"><rect x=".5" y=".5" width="5" height="5" fill="#ddd"/><rect x="2" y="2" width="2" height="2" fill="#555"/></svg>
<div class="t" style="left:85px;top:470.5px;font-size:6px;line-height:7px;color:#e8e8e8"><span class="cj b" style="width:6px;height:6px;margin-right:0px;color:#ffffff"></span><span class="cj " style="width:6px;height:6px;margin-right:0px;color:#ffffff"></span><span style="vertical-align:top">:3.40M/3.11M</span></div>
<svg style="left:149px;top:471px" width="5" height="6"><path d="M0.5 0.5L4.5 3L0.5 5.5Z" fill="#fafafa"/></svg>
<div class="a" style="left:35px;top:478px;width:727px;height:10px;background:#3d3d3d;border-top:1px solid #2c2c2c"></div>
<div class="a" style="left:36px;top:479px;width:21px;height:8px;background:#4a4a4a;"></div>
<div class="t" style="left:38px;top:480px"><span class="cj " style="width:5px;height:6px;margin-right:1px;color:#f8f8f8"></span><span class="cj d" style="width:5px;height:6px;margin-right:1px;color:#f8f8f8"></span><span class="cj c" style="width:5px;height:6px;margin-right:1px;color:#f8f8f8"></span></div>
<div class="a" style="left:0px;top:486px;width:762px;height:2px;background:#474747;"></div>
<div class="a" style="left:22px;top:486px;width:161px;height:2px;background:#606060;"></div>
<div class="a" style="left:752px;top:28px;width:10px;height:460px;background:#3a3a3a;background:linear-gradient(90deg,#2e2e2e,#3c3c3c 50%,#3e3e3e)"></div>
<div class="a" style="left:762px;top:28px;width:1px;height:460px;background:#2b2b2b;"></div>
<div class="a" style="left:752px;top:466px;width:10px;height:22px;background:#474747;"></div>
<svg style="left:752px;top:479px" width="6" height="7"><path d="M5.5 0.5V6.5L0.5 3.5Z" fill="#b8b8b8"/></svg>
<div class="a" style="left:754px;top:28px;width:146px;height:6px;background:#383838;"></div>
<div class="a" style="left:776px;top:31px;width:5px;height:2px;background:#a0a0a0;"></div>
<div class="a" style="left:893px;top:30px;width:4px;height:2px;background:#a0a0a0;"></div>
<div class="a" style="left:763px;top:34px;width:18px;height:454px;background:#4f4f4f;border-left:1px solid #3a3a3a;border-right:1px solid #3a3a3a"></div>
<div class="a" style="left:764px;top:35px;width:16px;height:3px;background:#444;"></div>
<svg style="left:767px;top:38px" width="10" height="10" viewBox="0 0 12 12"><circle cx="3" cy="2.5" r="1.2" fill="#bcbcbc"/><circle cx="6.5" cy="1.5" r="1.2" fill="#bcbcbc"/><circle cx="9" cy="3.5" r="1.2" fill="#bcbcbc"/><path d="M3 9Q3 5 6 5Q9 5 9 9Z" fill="#bcbcbc"/></svg>
<svg style="left:767px;top:51px" width="10" height="10" viewBox="0 0 12 12"><path d="M1 4L11 2.5V5.5L1 6Z" fill="#bcbcbc"/><rect x="1" y="7" width="10" height="1.5" fill="#9c9c9c"/></svg>
<svg style="left:767px;top:71px" width="10" height="10" viewBox="0 0 12 12"><path d="M5 1H7V6H10V8.5H2V6H5Z" fill="#bcbcbc"/><path d="M1.5 4V9.5H10.5V4" stroke="#aaa" stroke-width=".8" fill="none"/></svg>
<svg style="left:767px;top:91px" width="10" height="10" viewBox="0 0 12 12"><path d="M2.5 10L5.5 1.5H6.5L9.5 10M3.8 6.5H8.2" stroke="#bcbcbc" stroke-width="1.2" fill="none"/><path d="M11 1V10" stroke="#aaa" stroke-width=".8"/></svg>
<svg style="left:767px;top:104px" width="10" height="10" viewBox="0 0 12 12"><circle cx="5" cy="4" r="2.8" fill="#bcbcbc"/><path d="M6 1.5V10M8 1.5V10" stroke="#bcbcbc" stroke-width=".9"/></svg>
<svg style="left:767px;top:123px" width="10" height="10" viewBox="0 0 12 12"><path d="M1.5 10.5L10.5 1.5M1.5 1.5L10.5 10.5" stroke="#bcbcbc" stroke-width="1.4"/><circle cx="9" cy="3" r="1.8" fill="#bcbcbc"/></svg>
<svg style="left:767px;top:143px" width="10" height="10" viewBox="0 0 12 12"><circle cx="6" cy="6" r="4.3" fill="#6a6a6a" stroke="#bcbcbc" stroke-width="1.4"/><circle cx="4.6" cy="6.3" r="1.2" fill="#bcbcbc"/><circle cx="7.4" cy="6.3" r="1.2" fill="#bcbcbc"/></svg>
<div class="a" style="left:766px;top:66px;width:12px;height:1px;background:#3c3c3c;"></div>
<div class="a" style="left:766px;top:67px;width:12px;height:1px;background:#5a5a5a;"></div>
<div class="a" style="left:766px;top:87px;width:12px;height:1px;background:#3c3c3c;"></div>
<div class="a" style="left:766px;top:88px;width:12px;height:1px;background:#5a5a5a;"></div>
<div class="a" style="left:766px;top:118px;width:12px;height:1px;background:#3c3c3c;"></div>
<div class="a" style="left:766px;top:119px;width:12px;height:1px;background:#5a5a5a;"></div>
<div class="a" style="left:766px;top:138px;width:12px;height:1px;background:#3c3c3c;"></div>
<div class="a" style="left:766px;top:139px;width:12px;height:1px;background:#5a5a5a;"></div>
<div class="a" style="left:766px;top:158px;width:12px;height:1px;background:#3c3c3c;"></div>
<div class="a" style="left:766px;top:159px;width:12px;height:1px;background:#5a5a5a;"></div>
<div class="a" style="left:781px;top:28px;width:1px;height:460px;background:#2e2e2e;"></div>
<div class="a" style="left:782px;top:34px;width:118px;height:454px;background:#474747;"></div>
<div class="a" style="left:888px;top:42px;width:12px;height:210px;background:#444;"></div>
<div class="a" style="left:893px;top:42px;width:3px;height:210px;background:#383838;"></div>
<div class="a" style="left:888px;top:271px;width:12px;height:208px;background:#444;"></div>
<div class="a" style="left:893px;top:271px;width:3px;height:208px;background:#383838;"></div>
<div class="a" style="left:782px;top:34px;width:118px;height:8px;background:#363636;"></div>
<div class="a" style="left:784px;top:34px;width:15px;height:8px;background:#3e3e3e;border:1px solid #2c2c2c;border-bottom:none"></div>
<div class="t" style="left:786px;top:36px"><span class="cj " style="width:5px;height:5px;margin-right:1px;color:#a0a0a0"></span><span class="cj d" style="width:5px;height:5px;margin-right:1px;color:#a0a0a0"></span></div>
<div class="a" style="left:801px;top:34px;width:29px;height:8px;background:#505050;border:1px solid #2c2c2c;border-bottom:none"></div>
<div class="t" style="left:805px;top:36px"><span class="cj c" style="width:5px;height:5px;margin-right:0.5px;color:#e0e0e0"></span><span class="cj b" style="width:5px;height:5px;margin-right:0.5px;color:#e0e0e0"></span><span class="cj " style="width:5px;height:5px;margin-right:0.5px;color:#e0e0e0"></span><span class="cj d" style="width:5px;height:5px;margin-right:0.5px;color:#e0e0e0"></span></div>
<svg style="left:890px;top:35px" width="8" height="7"><path d="M0 1.5H4M0 3.5H7M0 5.5H7" stroke="#d4d4d4" stroke-width=".9"/><path d="M5 0.5L7.5 1.5L5 2.5Z" fill="#d4d4d4"/></svg>
<svg style="left:785px;top:46px" width="8" height="9"><path d="M1 8L7 1.5" stroke="#fafafa" stroke-width="1.3"/><path d="M0.8 5.5L3 7.5" stroke="#fafafa" stroke-width="1"/></svg>
<div class="a" style="left:795px;top:45px;width:13px;height:15px;background:#ffffff;border:1px solid #3a3a3a"></div>
<svg style="left:796px;top:46px" width="11" height="13" viewBox="0 0 11 13"><path d="M9 1.5L6 3.5L4 4.5L3 5.5L5 6" stroke="#6a4a3a" stroke-width="1.1" fill="none"/><circle cx="6" cy="4" r="1" fill="#5a3a2a"/><rect x="4" y="5.5" width="2" height="1.5" fill="#a04040"/><path d="M3.5 7L7.5 7.8L6 9Z" fill="#c8c4c0"/><path d="M5.2 9V12.5" stroke="#b09080" stroke-width=".8"/></svg>
<div class="t" style="left:811px;top:48px;font-size:6px;line-height:7px"><span class="cj b" style="width:6px;height:7px;margin-right:1px;color:#fafafa"></span><span class="cj " style="width:6px;height:7px;margin-right:1px;color:#fafafa"></span><span class="cj d" style="width:6px;height:7px;margin-right:1px;color:#fafafa"></span><span class="cj c" style="width:6px;height:7px;margin-right:1px;color:#fafafa"></span><span class="cj b" style="width:6px;height:7px;margin-right:1px;color:#fafafa"></span><span style="vertical-align:top">.jpg</span></div>
<div class="a" style="left:783px;top:60px;width:105px;height:1px;background:#3e3e3e;"></div>
<div class="a" style="left:783px;top:62px;width:105px;height:1px;background:#3e3e3e;"></div>
<div class="a" style="left:787px;top:64px;width:1px;height:7px;background:#6a6a6a;"></div>
<svg style="left:797px;top:64px" width="8" height="8"><rect x="0.5" y="0.5" width="7" height="7" fill="none" stroke="#aaa" stroke-width=".8"/><path d="M2 2.5H6M2 4H6M2 5.5H6" stroke="#aaa" stroke-width=".6"/></svg>
<div class="t" style="left:810px;top:64px"><span class="cj d" style="width:6px;height:7px;margin-right:1px;color:#f8f8f8"></span><span class="cj c" style="width:6px;height:7px;margin-right:1px;color:#f8f8f8"></span></div>
<div class="a" style="left:782px;top:74px;width:106px;height:10px;background:#5b6478;"></div>
<svg style="left:797px;top:75px" width="8" height="8"><rect x="0.5" y="0.5" width="7" height="7" fill="none" stroke="#c8ccd6" stroke-width=".8"/><path d="M2 2.5H6M2 4H6M2 5.5H6" stroke="#c8ccd6" stroke-width=".6"/></svg>
<div class="t" style="left:810px;top:75.5px"><span class="cj " style="width:5px;height:7px;margin-right:1px;color:#ffffff"></span><span class="cj d" style="width:5px;height:7px;margin-right:1px;color:#ffffff"></span><span class="cj c" style="width:5px;height:7px;margin-right:1px;color:#ffffff"></span><span class="cj b" style="width:5px;height:7px;margin-right:1px;color:#ffffff"></span></div>
<div class="a" style="left:782px;top:251px;width:118px;height:1px;background:#3a3a3a;"></div>
<div class="a" style="left:782px;top:252px;width:118px;height:9px;background:#4d4d4d;"></div>
<svg style="left:851px;top:253px" width="40" height="8"><path d="M1 7V4L4 1L7 4V7Z" fill="#cfcfcf"/><rect x="15" y="1.5" width="7" height="5.5" fill="#cfcfcf"/><rect x="16.5" y="3" width="4" height="2.5" fill="#474747"/><path d="M28 1.5H34M29 2.5V7H33V2.5" stroke="#cfcfcf" stroke-width="1.2" fill="none"/></svg>
<div class="a" style="left:782px;top:261px;width:118px;height:2px;background:#2b2b2b;"></div>
<div class="a" style="left:782px;top:263px;width:118px;height:8px;background:#363636;"></div>
<div class="a" style="left:784px;top:263px;width:11px;height:8px;background:#3c3c3c;border:1px solid #2c2c2c;border-bottom:none"></div>
<div class="t" style="left:786px;top:264px"><span class="cj b" style="width:6px;height:6px;margin-right:0px;color:#d4d4d4"></span></div>
<div class="a" style="left:797px;top:263px;width:17px;height:8px;background:#505050;border:1px solid #2c2c2c;border-bottom:none"></div>
<div class="t" style="left:799px;top:264px"><span class="cj c" style="width:6px;height:6px;margin-right:1px;color:#fafafa"></span><span class="cj b" style="width:6px;height:6px;margin-right:1px;color:#fafafa"></span></div>
<div class="a" style="left:815px;top:263px;width:16px;height:8px;background:#444;border:1px solid #2c2c2c;border-bottom:none"></div>
<div class="t" style="left:818px;top:264px"><span class="cj " style="width:5px;height:6px;margin-right:1px;color:#d4d4d4"></span><span class="cj d" style="width:5px;height:6px;margin-right:1px;color:#d4d4d4"></span></div>
<svg style="left:890px;top:264px" width="8" height="7"><path d="M0 1.5H4M0 3.5H7M0 5.5H7" stroke="#d4d4d4" stroke-width=".9"/><path d="M5 0.5L7.5 1.5L5 2.5Z" fill="#d4d4d4"/></svg>
<div class="a" style="left:784px;top:272px;width:33px;height:9px;background:#575757;border:1px solid #404040"></div>
<div class="t" style="left:787px;top:273px"><span class="cj d" style="width:6px;height:7px;margin-right:1px;color:#fafafa"></span><span class="cj c" style="width:6px;height:7px;margin-right:1px;color:#fafafa"></span></div>
<div class="a" style="left:810px;top:275px;width:4px;height:3px;background:transparent;border-left:2px solid transparent;border-right:2px solid transparent;border-top:3px solid #ccc;width:0;height:0"></div>
<svg style="left:826px;top:273px" width="8" height="8"><rect x="0.5" y="1" width="7" height="6" fill="none" stroke="#d0d0d0" stroke-width="1"/><path d="M1 6L3.5 3.5L5 5L7 3" stroke="#d0d0d0" stroke-width="1" fill="none"/></svg>
<svg style="left:838px;top:273px" width="8" height="8"><circle cx="4" cy="4" r="3.2" fill="#d0d0d0"/><path d="M4 0.8A3.2 3.2 0 0 0 4 7.2Z" fill="#777"/></svg>
<svg style="left:849px;top:273px" width="8" height="8"><path d="M1 1.5H7M4 1.5V7.5" stroke="#d0d0d0" stroke-width="1.3"/></svg>
<svg style="left:860px;top:273px" width="8" height="8"><rect x="1" y="1" width="2.5" height="2.5" fill="#d0d0d0"/><rect x="4.5" y="1" width="2.5" height="2.5" fill="#d0d0d0"/><rect x="1" y="4.5" width="2.5" height="2.5" fill="#d0d0d0"/><rect x="4.5" y="4.5" width="2.5" height="2.5" fill="#d0d0d0"/></svg>
<svg style="left:872px;top:273px" width="8" height="8"><path d="M1 7.5L4 0.5L7 7.5M2.2 5H5.8" stroke="#d0d0d0" stroke-width="1.1" fill="none"/></svg>
<div class="a" style="left:818px;top:272px;width:1px;height:9px;background:#3a3a3a;"></div>
<svg style="left:888px;top:272px" width="7" height="9"><circle cx="3.5" cy="3.5" r="2.8" fill="#222" stroke="#999" stroke-width=".7"/><circle cx="3.5" cy="3" r="1.2" fill="#bbb"/><rect x="2.5" y="6.5" width="2" height="2" fill="#666"/></svg>
<div class="a" style="left:783px;top:283px;width:108px;height:1px;background:#3e3e3e;"></div>
<div class="a" style="left:784px;top:285px;width:51px;height:9px;background:#555;border:1px solid #404040"></div>
<div class="t" style="left:787px;top:286px"><span class="cj b" style="width:6px;height:7px;margin-right:1px;color:#dedede"></span><span class="cj " style="width:6px;height:7px;margin-right:1px;color:#dedede"></span></div>
<div class="a" style="left:829px;top:288px;width:4px;height:3px;background:transparent;border-left:2px solid transparent;border-right:2px solid transparent;border-top:3px solid #ccc;width:0;height:0"></div>
<div class="t" style="left:839px;top:286px"><span class="cj c" style="width:5px;height:7px;margin-right:0.5px;color:#d4d4d4"></span><span class="cj b" style="width:5px;height:7px;margin-right:0.5px;color:#d4d4d4"></span><span class="cj " style="width:5px;height:7px;margin-right:0.5px;color:#d4d4d4"></span><span class="cj d" style="width:5px;height:7px;margin-right:0.5px;color:#d4d4d4"></span><span style="font-size:6px;vertical-align:top">:</span></div>
<div class="a" style="left:864px;top:285px;width:17px;height:9px;background:#4a4a4a;border:1px solid #3c3c3c"></div>
<div class="t" style="left:866px;top:286px;font-size:6px;line-height:7px;color:#6a6a6a;">100%</div>
<div class="a" style="left:884px;top:285px;width:12px;height:10px;background:#4a4a4a;border:1px solid #3a3a3a"></div>
<svg style="left:888px;top:287px" width="5" height="6"><path d="M0.5 0.5L4 3L0.5 5.5Z" fill="#9a9a9a"/></svg>
<div class="t" style="left:784px;top:298px"><span class="cj " style="width:5px;height:7px;margin-right:1px;color:#d4d4d4"></span><span class="cj d" style="width:5px;height:7px;margin-right:1px;color:#d4d4d4"></span><span style="font-size:6px;vertical-align:top">:</span></div>
<svg style="left:802px;top:298px" width="45" height="8"><rect x="0.5" y="0.5" width="6" height="6" fill="#9a9a9a"/><rect x="2" y="2" width="3" height="3" fill="#474747"/><path d="M11 7L16 1.5" stroke="#a0a0a0" stroke-width="1.2"/><path d="M24.5 0V8M21 4H28" stroke="#a0a0a0" stroke-width="1"/><path d="M33 3.5V2A2 2 0 0 1 37 2V3.5M32 3.5H38V7.5H32Z" fill="#9a9a9a"/></svg>
<div class="t" style="left:851px;top:298px"><span class="cj d" style="width:5px;height:7px;margin-right:1px;color:#d4d4d4"></span><span class="cj c" style="width:5px;height:7px;margin-right:1px;color:#d4d4d4"></span><span style="font-size:6px;vertical-align:top">:</span></div>
<div class="a" style="left:866px;top:297px;width:15px;height:9px;background:#4a4a4a;border:1px solid #3c3c3c"></div>
<div class="t" style="left:867px;top:298px;font-size:6px;line-height:7px;color:#6a6a6a;">100%</div>
<div class="a" style="left:884px;top:297px;width:12px;height:10px;background:#4a4a4a;border:1px solid #3a3a3a"></div>
<svg style="left:888px;top:299px" width="5" height="6"><path d="M0.5 0.5L4 3L0.5 5.5Z" fill="#9a9a9a"/></svg>
<div class="a" style="left:783px;top:308px;width:108px;height:1px;background:#3c3c3c;"></div>
<div class="a" style="left:782px;top:309px;width:106px;height:19px;background:#505050;"></div>
<div class="a" style="left:782px;top:328px;width:106px;height:1px;background:#3c3c3c;"></div>
<div class="a" style="left:795px;top:309px;width:1px;height:19px;background:#404040;"></div>
<svg style="left:784px;top:315px" width="9" height="6"><path d="M0.5 3Q4.5 -1 8.5 3Q4.5 7 0.5 3Z" fill="none" stroke="#cfcfcf" stroke-width=".9"/><circle cx="4.5" cy="3" r="1.2" fill="#cfcfcf"/></svg>
<div class="a" style="left:799px;top:311px;width:13px;height:16px;background:#ffffff;border:1px solid #2e2e2e"></div>
<svg style="left:800px;top:312px" width="11" height="14" viewBox="0 0 11 14"><path d="M9 1.5L6 3.5L4 4.5L3 5.5L5 6" stroke="#6a4a3a" stroke-width="1.1" fill="none"/><circle cx="6" cy="4" r="1" fill="#5a3a2a"/><rect x="4" y="5.5" width="2" height="1.5" fill="#a04040"/><path d="M3.5 7.5L7.5 8.3L6 10Z" fill="#c8c4c0"/><path d="M5.5 10V13.5" stroke="#b09080" stroke-width=".8"/></svg>
<div class="t" style="left:816px;top:315px"><span class="cj b" style="width:6px;height:7px;margin-right:1px;color:#ffffff"></span><span class="cj " style="width:6px;height:7px;margin-right:1px;color:#ffffff"></span></div>
<svg style="left:830px;top:314px" width="6" height="9"><path d="M1.5 4V2.5A1.5 1.5 0 0 1 4.5 2.5V4M0.5 4H5.5V8.5H0.5Z" fill="#cfcfcf"/></svg>
<div class="a" style="left:782px;top:478px;width:118px;height:10px;background:#4d4d4d;border-top:1px solid #3a3a3a"></div>
<svg style="left:803px;top:480px" width="86" height="8"><path d="M1 4H7" stroke="#9a9a9a" stroke-width="1.4"/><path d="M16 0.5L18 3H17V6H15V3H14Z" fill="#8a8a8a"/><rect x="27" y="1" width="6" height="6" fill="none" stroke="#cfcfcf" stroke-width="1"/><circle cx="30" cy="4" r="1.5" fill="#cfcfcf"/><circle cx="43" cy="4" r="3" fill="#cfcfcf"/><path d="M43 1V7A3 3 0 0 1 43 1Z" fill="#474747"/><path d="M54 1.5H57L58 2.5H61V7H54Z" fill="#cfcfcf"/><rect x="66" y="1" width="6" height="6" fill="#cfcfcf"/><path d="M67.5 4.5L70.5 4.5" stroke="#474747"/><path d="M79 1.5H85M80 2.5V7H84V2.5" stroke="#8a8a8a" stroke-width="1.2" fill="none"/></svg>
<div class="a" style="left:237px;top:75px;width:323px;height:366px;background:#1c1c1c"></div>
<div class="a" style="left:238px;top:76px;width:321px;height:364px;background:#ffffff;overflow:hidden"></div>
<svg style="left:238px;top:76px;overflow:hidden" width="321" height="364" viewBox="238 76 321 364">
<defs>
<linearGradient id="tut" x1="1" y1="0" x2="0" y2="1"><stop offset="0" stop-color="#d2ccc5"/><stop offset=".45" stop-color="#e6e2dd"/><stop offset="1" stop-color="#f6f4f1"/></linearGradient>
<linearGradient id="legg" x1="0" y1="0" x2="1" y2="0"><stop offset="0" stop-color="#eed0bc"/><stop offset=".45" stop-color="#dcae94"/><stop offset="1" stop-color="#cc9c82"/></linearGradient>
<linearGradient id="shin" x1="0" y1="0" x2="0" y2="1"><stop offset="0" stop-color="#e8c6ac"/><stop offset=".6" stop-color="#d8aa8c"/><stop offset="1" stop-color="#c09070"/></linearGradient>
<linearGradient id="arm1" x1="0" y1="0" x2="0.3" y2="1"><stop offset="0" stop-color="#d09a70"/><stop offset="1" stop-color="#925e3e"/></linearGradient>
<linearGradient id="arm2" x1="0" y1="0" x2="0" y2="1"><stop offset="0" stop-color="#a87250"/><stop offset=".5" stop-color="#cc9870"/><stop offset="1" stop-color="#e2b48c"/></linearGradient>
<linearGradient id="red" x1="0" y1="0" x2="1" y2="1"><stop offset="0" stop-color="#d83040"/><stop offset="1" stop-color="#b81c2a"/></linearGradient>
<linearGradient id="shoe" x1="0" y1="0" x2="0" y2="1"><stop offset="0" stop-color="#d9c4a6"/><stop offset="1" stop-color="#b89a78"/></linearGradient>
<radialGradient id="face" cx=".4" cy=".5" r=".6"><stop offset="0" stop-color="#dcae90"/><stop offset=".7" stop-color="#c89478"/><stop offset="1" stop-color="#a87458"/></radialGradient>
<filter id="soft" x="-5%" y="-5%" width="110%" height="110%"><feConvolveMatrix order="3" kernelMatrix="1 2 1 2 4 2 1 2 1" divisor="16" edgeMode="none"/></filter>
<filter id="tb" x="-10%" y="-10%" width="120%" height="120%"><feGaussianBlur stdDeviation="1"/></filter>
<filter id="haze" x="-100%" y="-100%" width="300%" height="300%"><feGaussianBlur stdDeviation="8"/></filter>
</defs>
<!-- floor shading -->
<path d="M398 433 Q470 428 559 420 V440 H398Z" fill="#f2f2f2" filter="url(#haze)"/>
<path d="M398 432 Q450 430 520 424" stroke="#e6e6e6" stroke-width="2" fill="none" filter="url(#haze)"/>
<!-- haze -->
<ellipse cx="336" cy="264" rx="20" ry="18" fill="#f6f6f6" filter="url(#haze)"/>
<g filter="url(#soft)">
<!-- standing leg -->
<path d="M384 276 L402 276 Q408 292 411 318 Q415 340 412 352 Q408 370 405 390 L394 391 Q393 372 392 352 Q390 325 388 305 Q385 290 384 276Z" fill="url(#legg)"/>
<path d="M404 300 Q411 330 404 372" stroke="#c48e70" stroke-width="1.2" fill="none" opacity=".6"/>
<!-- standing shoe -->
<path d="M392 389 L406 389 Q407 410 404 424 Q401 433 396 433 Q391 428 390 412Z" fill="#e8cdb9"/>
<path d="M391 397 Q398 394 406 395" stroke="#c9a088" stroke-width="1" fill="none"/>
<path d="M395 425 Q398 432 401 428" stroke="#f4e6dc" stroke-width="1.5" fill="none"/>
<!-- tutu -->
<g filter="url(#tb)">
<path d="M370 212 Q384 209 396 214 Q430 225 462 240 Q463 248 446 257 Q428 267 408 273 Q392 279 378 281 Q362 284 349 283 Q348 262 353 244 Q358 228 370 212Z" fill="url(#tut)"/>
<path d="M396 216 Q430 228 461 241 Q440 238 410 230Z" fill="#c9c2b9" opacity=".55"/>
<path d="M398 226 Q428 236 456 247 M395 236 Q425 246 446 256 M372 232 Q366 258 360 281 M384 230 Q382 256 382 279 M398 238 Q402 258 404 274" stroke="#d0c9c1" stroke-width="1.5" fill="none" opacity=".55"/>
<path d="M352 266 Q380 272 424 262" stroke="#f7f6f4" stroke-width="5" fill="none" opacity=".6"/>
</g>
<path d="M370 214 Q383 224 398 218" stroke="#c9c2b9" stroke-width="3" fill="none"/>
<!-- raised leg: thigh -->
<path d="M360 281 L380 281 Q378 292 366 302 Q360 310 356 316 Q349 316 349 308 Q350 296 360 281Z" fill="#d8ac90"/>
<path d="M370 281 L379 281 L374 293Z" fill="#b98a6c"/>
<!-- shin -->
<path d="M352 306 Q362 293 392 291 Q410 290 424 288 L428 300 Q410 304 396 309 Q372 318 356 318 Q348 315 352 306Z" fill="url(#shin)"/>
<!-- raised shoe -->
<path d="M421 286 Q428 278 440 279 Q452 277 464 278 Q464 283 452 287 Q440 293 430 300 L424 299Z" fill="url(#shoe)"/>
<path d="M426 284 Q440 282 460 280 M430 292 Q445 286 458 282" stroke="#a08466" stroke-width=".9" fill="none"/>
<!-- red leotard lower -->
<path d="M357 184 Q378 188 400 190 Q398 201 390 205 Q374 210 355 214 Q354 200 357 184Z" fill="url(#red)"/>
<!-- torso skin -->
<path d="M376 157 Q390 146 406 147 L415 158 Q415 176 410 188 Q404 196 398 198 Q392 190 386 184 L376 176Z" fill="#c89268"/>
<path d="M388 160 Q398 166 402 184" stroke="#deb08a" stroke-width="3" fill="none" opacity=".6"/>
<!-- chest inside strap -->
<path d="M374 158 L388 156 L388 172 L368 175Z" fill="#c89470"/>
<!-- red strap -->
<path d="M370 155 L379 154 L373 176 L362 177Z" fill="#cf2a38"/>
<path d="M366 175 L390 171" stroke="#c82634" stroke-width="2.5"/>
<!-- neck -->
<path d="M402 150 L418 152 L414 170 L400 166Z" fill="#c08a62"/>
<!-- left upper arm -->
<path d="M333 168 Q350 170 368 170 Q385 171 396 176 L400 188 Q385 187 360 181 Q344 178 335 175 Q330 172 333 168Z" fill="url(#arm2)"/>
<path d="M338 176 Q365 182 398 187" stroke="#e0b088" stroke-width="1.5" fill="none" opacity=".7"/>
<!-- left forearm -->
<path d="M389 140 Q370 144 352 153 Q338 160 331 166 Q331 173 336 172 Q352 166 366 161 Q374 158 380 157Z" fill="#b88258"/>
<path d="M386 142 Q366 148 334 166" stroke="#d4a27c" stroke-width="1.5" fill="none" opacity=".7"/>
<!-- hand -->
<path d="M376 144 Q382 137 391 139 Q394 146 391 153 Q385 158 378 157 Q374 151 376 144Z" fill="#c08a62"/>
<!-- raised arm -->
<path d="M418 126 Q428 114 440 104.5 Q450 99 460 95.5 L477 85 Q483 81 489 80.5 Q495 81 498 83 Q501 88 503 96 L501 97 Q498 92 495.5 89.5 Q492 91 489 92 L477 93.5 Q468 99 460 105 Q450 111 441 118 Q436 124 436 132Z" fill="url(#arm1)"/>
<path d="M424 121 Q440 107 458 98 Q468 92 478 87" stroke="#e2b690" stroke-width="1.3" fill="none" opacity=".6"/>
<!-- head -->
<ellipse cx="424" cy="143" rx="21" ry="19" transform="rotate(-40 424 143)" fill="url(#face)"/>
<path d="M424 126 Q436 119 444 128 Q449 138 446 150 Q441 157 436 158 Q440 146 436 136 Q430 128 424 126Z" fill="#a48466"/>
<path d="M430 124 Q440 122 445 130" stroke="#8a6c52" stroke-width="2" fill="none" opacity=".7"/>
<ellipse cx="418" cy="142" rx="2.6" ry="1.6" transform="rotate(40 418 142)" fill="#5a3a2a"/>
<ellipse cx="425" cy="151" rx="2.6" ry="1.6" transform="rotate(40 425 151)" fill="#5a3a2a"/>
<path d="M413 137 Q420 135 423 141" stroke="#f0c8a8" stroke-width="1.4" fill="none" opacity=".8"/>
<path d="M408 151 Q410 156 414 157" stroke="#9a5a48" stroke-width="1.3" fill="none"/>
<path d="M414 146 Q418 150 419 153" stroke="#e8bea0" stroke-width="1.3" fill="none" opacity=".8"/>
</g>
</svg>

</div></body></html>
